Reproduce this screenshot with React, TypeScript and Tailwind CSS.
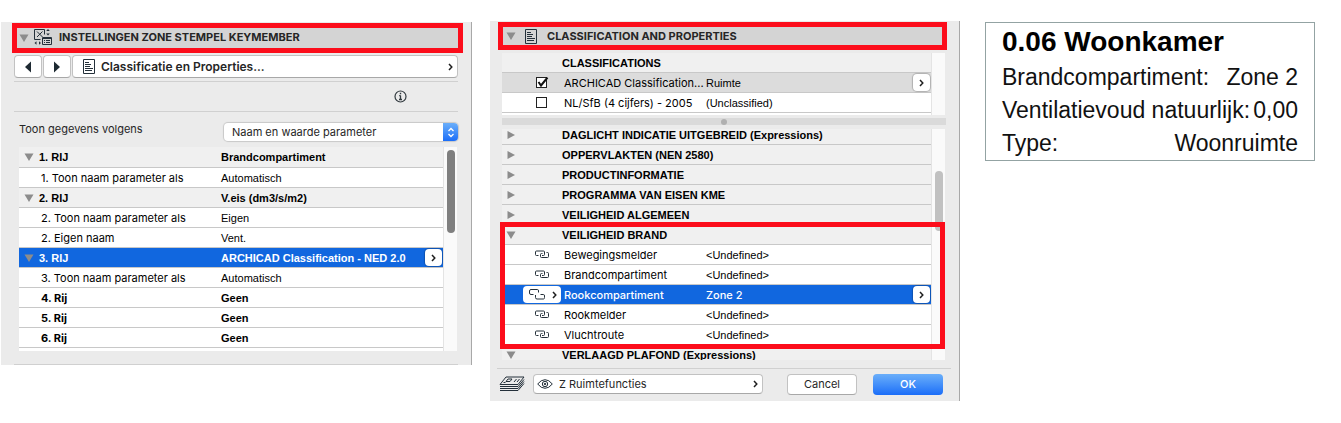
import type { ReactNode } from "react";
import clsx from "clsx";

type Kind = "group" | "item" | "bold" | "selected";

type ZoneRow = { label: string; value: string; kind: Kind };

type PropertyRow = {
  label: string;
  value?: string;
  kind: "closed" | "open" | "item" | "selected";
};

const zoneRows: ZoneRow[] = [
  { label: "1. RIJ", value: "Brandcompartiment", kind: "group" },
  { label: "1. Toon naam parameter als", value: "Automatisch", kind: "item" },
  { label: "2. RIJ", value: "V.eis (dm3/s/m2)", kind: "group" },
  { label: "2. Toon naam parameter als", value: "Eigen", kind: "item" },
  { label: "2. Eigen naam", value: "Vent.", kind: "item" },
  {
    label: "3. RIJ",
    value: "ARCHICAD Classification - NED 2.0",
    kind: "selected",
  },
  { label: "3. Toon naam parameter als", value: "Automatisch", kind: "item" },
  { label: "4. Rij", value: "Geen", kind: "bold" },
  { label: "5. Rij", value: "Geen", kind: "bold" },
  { label: "6. Rij", value: "Geen", kind: "bold" },
];

const propertyRows: PropertyRow[] = [
  { label: "DAGLICHT INDICATIE UITGEBREID (Expressions)", kind: "closed" },
  { label: "OPPERVLAKTEN (NEN 2580)", kind: "closed" },
  { label: "PRODUCTINFORMATIE", kind: "closed" },
  { label: "PROGRAMMA VAN EISEN KME", kind: "closed" },
  { label: "VEILIGHEID ALGEMEEN", kind: "closed" },
  { label: "VEILIGHEID BRAND", kind: "open" },
  { label: "Bewegingsmelder", value: "<Undefined>", kind: "item" },
  { label: "Brandcompartiment", value: "<Undefined>", kind: "item" },
  { label: "Rookcompartiment", value: "Zone 2", kind: "selected" },
  { label: "Rookmelder", value: "<Undefined>", kind: "item" },
  { label: "Vluchtroute", value: "<Undefined>", kind: "item" },
  { label: "VERLAAGD PLAFOND (Expressions)", kind: "open" },
];

const stampLines = [
  { label: "Brandcompartiment:", value: "Zone 2" },
  { label: "Ventilatievoud natuurlijk:", value: "0,00" },
  { label: "Type:", value: "Woonruimte" },
];

const ui = "font-['Inter',sans-serif]";
const helv = "font-['Liberation_Sans',Arial,sans-serif]";

const Triangle = ({ open }: { open: boolean }) => (
  <svg width="10" height="10" viewBox="0 0 10 10" className="shrink-0">
    <path
      d={open ? "M0.5 1.5h9L5 9z" : "M1.5 1v8L9 5z"}
      fill="#8c8c8c"
    />
  </svg>
);

const Chevron = () => (
  <svg width="5" height="8" viewBox="0 0 5 8" className="shrink-0">
    <path d="M1 1l2.8 3L1 7" fill="none" stroke="#1f1f1f" strokeWidth="1.5" />
  </svg>
);

const StampIcon = () => (
  <svg
    width="20"
    height="18"
    viewBox="0 0 20 18"
    fill="none"
    stroke="#24303a"
    className="shrink-0"
  >
    <path d="M7.500 10.500h-6v-10h10v5" />
    <path d="M4 2.500l5.500 5.500M9.500 2.500l-5.500 5.500" />
    <path d="M9.500 8.500h9v7h-9zM9.500 9.500h9" />
    <path d="M11 11.500h1M13 11.500h4M11 13.500h1M13 13.500h4" />
    <path
      d="M15 0l1.800 2h-3.600zM15 6.500l1.800-2h-3.600zM1.500 14l2-1.800v3.600zM8 14l-2-1.800v3.600z"
      fill="#24303a"
      stroke="none"
    />
  </svg>
);

const PageIcon = () => (
  <svg
    width="12"
    height="15"
    viewBox="0 0 12 15"
    fill="none"
    stroke="#24303a"
    className="shrink-0"
  >
    <path d="M0.500 0.500h11v14h-11z" />
    <path d="M2 3.500h4M2 5.500h6M2 7.500h5M2 9.500h8M2 11.500h7" />
  </svg>
);

const InfoIcon = () => (
  <svg width="13" height="13" viewBox="0 0 13 13" fill="none" stroke="#333b40">
    <circle cx="6.500" cy="6.500" r="5.500" strokeWidth="1.2" />
    <path d="M6.500 5.500v4M5.200 5.600h1.300M5 9.500h3" strokeWidth="1.3" />
    <path d="M5.800 3.500h1.400" strokeWidth="1.5" />
  </svg>
);

const LinkIcon = () => (
  <svg
    width="15"
    height="9"
    viewBox="0 0 15 9"
    fill="none"
    stroke="#24303a"
  >
    <path d="M3.500 5.500H1.500Q0.500 5.500 0.500 4.500V2Q0.500 1 1.500 1H8.500Q9.500 1 9.500 2V4.500Q9.500 5.500 8.500 5.500H7" />
    <path d="M11.500 2.500H12.500Q13.500 2.500 13.500 3.500V6.500Q13.500 7.500 12.500 7.500H6.500Q5.500 7.500 5.500 6.500V4.500Q5.500 3.500 6.500 3.500H7.500" />
  </svg>
);

const UnlinkIcon = () => (
  <svg
    width="17"
    height="11"
    viewBox="0 0 17 11"
    fill="none"
    stroke="#24303a"
  >
    <path d="M4.500 5.500H2Q0.500 5.500 0.500 4V2Q0.500 0.500 2 0.500H8.500Q9.500 0.500 9.500 2V3.500" />
    <path d="M6.500 6V8.500Q6.500 10 8 10H14.500Q15.500 10 15.500 8.500V7Q15.500 5.500 14.500 5.500H11.500" />
  </svg>
);

const LayersIcon = () => (
  <svg
    width="26"
    height="16"
    viewBox="0 0 26 16"
    fill="none"
    stroke="#24303a"
    className="shrink-0"
  >
    <path d="M7 1h18l-6 7.500H1z" fill="#ebebeb" />
    <path d="M1 10.500h18l6-7M1 12.500h18l6-7M1 14.500h18l6-7" />
    <path d="M7 5.500l2-2.500h4l-2 2.500zM15 6l2.500-3M18 6l2.500-3M4.500 6.500h2" />
  </svg>
);

const EyeIcon = () => (
  <svg
    width="16"
    height="10"
    viewBox="0 0 16 10"
    fill="none"
    stroke="#24303a"
    className="shrink-0"
  >
    <path d="M0.700 5Q4 0.700 8 0.700T15.300 5Q12 9.300 8 9.300T0.700 5z" />
    <circle cx="8" cy="5" r="2.700" />
    <circle cx="8" cy="5" r="0.800" fill="#24303a" />
  </svg>
);

const SectionHeader = ({
  icon,
  title,
  className,
}: {
  icon: ReactNode;
  title: string;
  className: string;
}) => (
  <header
    className={clsx(
      "flex items-center border-5 border-[#fc0d1b] bg-[#d4d4d4] text-[#262626]",
      className
    )}
  >
    <Triangle open />
    {icon}
    <h2 className="text-[11px] font-bold whitespace-nowrap">{title}</h2>
  </header>
);

const RowButton = ({ label }: { label: string }) => (
  <button
    type="button"
    aria-label={label}
    className="flex size-[17px] shrink-0 items-center justify-center rounded-sm bg-white shadow-[0_0_1px_1px_rgba(0,0,0,0.2)]"
  >
    <Chevron />
  </button>
);

const ZoneTable = () => (
  <table className="w-full table-fixed border-separate border-spacing-0">
    <colgroup>
      <col className="w-[202px]" />
      <col />
    </colgroup>
    <tbody>
      {zoneRows.map((row) => {
        const parent = row.kind === "group" || row.kind === "selected";
        return (
          <tr
            key={row.label}
            className={clsx(
              "h-5 first:h-[21px]",
              row.kind === "group" && "bg-[#f0f0f0]",
              row.kind === "selected" && "bg-[#1167df] text-white",
              row.kind !== "item" && "font-bold"
            )}
          >
            <th
              scope="row"
              className="border-b border-[#c8c8c8] p-0 text-left font-[inherit]"
            >
              <div
                className={clsx(
                  "flex items-center gap-[5px] leading-4",
                  parent ? "pl-[5px]" : "pl-[22px]",
                  parent ? helv : ui,
                  row.kind === "item" ? "font-normal" : "font-bold"
                )}
              >
                {parent && <Triangle open />}
                {row.label}
              </div>
            </th>
            <td className={clsx("border-b border-[#c8c8c8] p-0", helv)}>
              <div className="flex items-center justify-between pr-px leading-4">
                {row.value}
                {row.kind === "selected" && <RowButton label="Wijzig 3. RIJ" />}
              </div>
            </td>
          </tr>
        );
      })}
    </tbody>
  </table>
);

const ZonePanel = () => (
  <section
    className={clsx(
      "mt-px min-w-0 border-r border-[#a8a8a8] bg-[#ebebeb] pt-px",
      ui
    )}
  >
    <SectionHeader
      className="mr-2 ml-[11px] h-[30px] pb-px pl-0.5"
      title="INSTELLINGEN ZONE STEMPEL KEYMEMBER"
      icon={
        <span className="mr-1.5 ml-1">
          <StampIcon />
        </span>
      }
    />
    <div className="mt-0.5 mr-[13px] ml-[13px] flex h-[23px] gap-px">
      <button
        type="button"
        aria-label="Vorige"
        className="flex w-7 items-center justify-center rounded border border-[#c2c2c2] border-b-[#a8a8a8] bg-white"
      >
        <svg width="8" height="12" viewBox="0 0 8 12">
          <path d="M7 0.500v11L1 6z" fill="#1e2a32" />
        </svg>
      </button>
      <button
        type="button"
        aria-label="Volgende"
        className="flex w-7 items-center justify-center rounded border border-[#c2c2c2] border-b-[#a8a8a8] bg-white"
      >
        <svg width="8" height="12" viewBox="0 0 8 12">
          <path d="M1 0.500v11L7 6z" fill="#1e2a32" />
        </svg>
      </button>
      <button
        type="button"
        className="flex flex-1 items-center rounded border border-[#c2c2c2] border-b-[#a8a8a8] bg-white pr-1 pl-2.5 text-xs font-semibold text-[#262626]"
      >
        <PageIcon />
        <span className="ml-1.5 flex-1 text-left">
          Classificatie en Properties...
        </span>
        <Chevron />
      </button>
    </div>
    <div className="mt-[3px] mr-[13px] ml-[13px] flex h-[31px] items-center justify-end border-y border-[#d0d0d0] pr-[51px]">
      <InfoIcon />
    </div>
    <div className="mt-[11px] mr-[13px] ml-[18px] flex h-[18px] items-start text-[11px] text-[#262626]">
      <label htmlFor="display-mode" className="w-[205px] leading-3">
        Toon gegevens volgens
      </label>
      <div className="relative h-full min-w-0 flex-1">
        <select
          id="display-mode"
          className="block h-full w-full appearance-none rounded-sm bg-white pl-2 leading-4 shadow-[0_0_1px_1px_rgba(0,0,0,0.15)]"
        >
          <option>Naam en waarde parameter</option>
        </select>
        <span className="pointer-events-none absolute inset-y-0 right-0 flex w-[15px] items-center justify-center rounded-r-sm bg-linear-to-b from-[#6aaef9] to-[#1a6df8]">
          <svg
            width="8"
            height="11"
            viewBox="0 0 8 11"
            fill="none"
            stroke="#fff"
            strokeWidth="1.3"
          >
            <path d="M1.500 4L4 1.500L6.500 4M1.500 7L4 9.500L6.500 7" />
          </svg>
        </span>
      </div>
    </div>
    <div className="mt-1.5 mr-[14px] ml-[18px] flex h-[204px] overflow-hidden bg-white text-[11px] text-black">
      <div className="min-w-0 flex-1 bg-white">
        <ZoneTable />
      </div>
      <div className="w-[14px] border-l border-[#e4e4e4] bg-[#fafafa] pt-[3px]">
        <div className="mx-auto h-[83px] w-2 rounded-full bg-[#7f7f7f]" />
      </div>
    </div>
    <div className="mt-[13px] mr-[13px] ml-[13px] border-t border-[#d0d0d0]" />
  </section>
);

const ClassificationCheck = ({
  label,
  checked,
}: {
  label: string;
  checked: boolean;
}) => (
  <span className="relative block size-[11px]">
    <input
      type="checkbox"
      aria-label={label}
      defaultChecked={checked}
      className="peer block size-[11px] appearance-none border border-[#222] bg-white"
    />
    <svg
      width="13"
      height="11"
      viewBox="0 0 13 11"
      className="pointer-events-none absolute top-0 left-0 hidden peer-checked:block"
    >
      <path
        d="M2.500 5L5 8.500L11.500 0.500"
        fill="none"
        stroke="#111"
        strokeWidth="2"
      />
    </svg>
  </span>
);

const PropertyColumns = () => (
  <colgroup>
    <col className="w-[60px]" />
    <col className="w-36" />
    <col />
  </colgroup>
);

const ClassificationTable = () => (
  <table className="w-full table-fixed border-separate border-spacing-0 [&_td]:h-5 [&_td]:border-b [&_td]:border-[#c8c8c8] [&_td]:p-0 [&_td]:leading-4">
    <PropertyColumns />
    <thead>
      <tr className="bg-[#f0f0f0]">
        <td />
        <th
          colSpan={2}
          className={clsx(
            "h-5 border-b border-[#c8c8c8] p-0 text-left leading-4 font-bold",
            helv
          )}
        >
          CLASSIFICATIONS
        </th>
      </tr>
    </thead>
    <tbody>
      <tr className="bg-[#dcdcdc]">
        <td>
          <div className="pl-[34px]">
            <ClassificationCheck label="ARCHICAD Classification" checked />
          </div>
        </td>
        <td>
          <div className="pl-0.5 whitespace-nowrap">
            ARCHICAD Classification...
          </div>
        </td>
        <td className={helv}>
          <div className="flex items-center justify-between pr-px">
            Ruimte
            <RowButton label="Kies classificatie" />
          </div>
        </td>
      </tr>
      <tr className="bg-white">
        <td>
          <div className="pl-[34px]">
            <ClassificationCheck label="NL/SfB (4 cijfers)" checked={false} />
          </div>
        </td>
        <td>
          <div className="pl-0.5 whitespace-nowrap">
            NL/SfB (4 cijfers) - 2005
          </div>
        </td>
        <td className={helv}>(Unclassified)</td>
      </tr>
    </tbody>
  </table>
);

const PropertyTable = () => (
  <table className="-mt-1 w-full table-fixed border-separate border-spacing-0 [&_td]:h-5 [&_td]:border-b [&_td]:border-[#c8c8c8] [&_td]:p-0 [&_td]:leading-4">
    <PropertyColumns />
    <tbody>
      {propertyRows.map((row) => {
        if (row.kind === "closed" || row.kind === "open") {
          return (
            <tr key={row.label} className="bg-[#f0f0f0]">
              <td>
                <div className="pl-1">
                  <Triangle open={row.kind === "open"} />
                </div>
              </td>
              <td
                colSpan={2}
                className={clsx("font-bold whitespace-nowrap", helv)}
              >
                {row.label}
              </td>
            </tr>
          );
        }
        const selected = row.kind === "selected";
        return (
          <tr
            key={row.label}
            className={selected ? "bg-[#1167df] text-white" : "bg-white"}
          >
            <td>
              {selected ? (
                <button
                  type="button"
                  aria-label="Koppeling"
                  className="ml-[21px] flex h-[17px] w-[38px] items-center justify-between rounded-sm bg-white pr-1 pl-1.5"
                >
                  <UnlinkIcon />
                  <Chevron />
                </button>
              ) : (
                <div className="pl-[33px]">
                  <LinkIcon />
                </div>
              )}
            </td>
            <td>
              <div className={clsx("pl-0.5", selected && "font-medium")}>
                {row.label}
              </div>
            </td>
            <td className={selected ? "font-medium" : helv}>
              <div className="flex items-center justify-between pr-px">
                {row.value}
                {selected && <RowButton label="Kies zone" />}
              </div>
            </td>
          </tr>
        );
      })}
    </tbody>
  </table>
);

const PropertiesPanel = () => (
  <section
    className={clsx(
      "ml-[18px] min-w-0 border-r border-[#a8a8a8] bg-[#ebebeb] pt-px",
      ui
    )}
  >
    <SectionHeader
      className="mr-3 ml-2 h-7 pl-[3px]"
      title="CLASSIFICATION AND PROPERTIES"
      icon={
        <span className="mr-2.5 ml-[9px]">
          <PageIcon />
        </span>
      }
    />
    <div className="mt-[3px] mr-[14px] ml-3 flex h-[62px] bg-white text-[11px] text-black">
      <div className="min-w-0 flex-1">
        <ClassificationTable />
      </div>
      <div className="w-[14px] border-l border-[#e4e4e4] bg-[#fafafa]" />
    </div>
    <div className="mt-[3px] mr-[13px] ml-3 flex h-[7px] items-center justify-center bg-[#dadada]">
      <span className="size-1.5 rounded-full bg-[#b0b0b0]" />
    </div>
    <div className="relative mt-1 mr-[14px] ml-3">
      <div className="flex h-[231px] overflow-hidden text-[11px] text-black">
        <div className="min-w-0 flex-1">
          <PropertyTable />
        </div>
        <div className="w-[14px] border-l border-[#e4e4e4] bg-[#fafafa] pt-[42px]">
          <div className="mx-auto h-[60px] w-2 rounded-full bg-[#c1c1c1]" />
        </div>
      </div>
      <div className="pointer-events-none absolute top-[93px] right-0 -left-0.5 h-[127px] border-5 border-[#fc0d1b]" />
    </div>
    <footer className="mt-2 mr-2 ml-[7px] flex items-start border-t border-[#d0d0d0] pt-[5px] pr-2 pb-1.5 pl-0.5 text-[11px] text-[#262626]">
      <span className="mt-0.5 mr-2">
        <LayersIcon />
      </span>
      <button
        type="button"
        className="mr-6 flex h-5 flex-1 items-center rounded border border-[#c2c2c2] border-b-[#a8a8a8] bg-white pr-1 pl-[3px]"
      >
        <EyeIcon />
        <span className="ml-1.5 flex-1 text-left">Z Ruimtefuncties</span>
        <Chevron />
      </button>
      <button
        type="button"
        className="mr-4 h-[21px] w-[70px] rounded border border-[#c2c2c2] border-b-[#a8a8a8] bg-white"
      >
        Cancel
      </button>
      <button
        type="button"
        className="h-[21px] w-[70px] rounded bg-linear-to-b from-[#6aaef9] to-[#1a6df8] font-medium text-white"
      >
        OK
      </button>
    </footer>
  </section>
);

const ZoneStamp = () => (
  <section
    className={clsx(
      "mt-px mr-[26px] ml-[25px] min-w-0 border border-[#93a3a3] bg-white px-4 text-black",
      helv
    )}
  >
    <h2 className="text-[28px] leading-[38px] font-bold whitespace-nowrap">
      0.06 Woonkamer
    </h2>
    <dl className="text-[23px] leading-[33px] text-[#111]">
      {stampLines.map((line) => (
        <div key={line.label} className="flex justify-between whitespace-nowrap">
          <dt>{line.label}</dt>
          <dd>{line.value}</dd>
        </div>
      ))}
    </dl>
  </section>
);

const App = () => {
  return (
    <main className="grid grid-cols-[471fr_488fr_381fr] items-start bg-white pt-[21px] pl-px">
      <ZonePanel />
      <PropertiesPanel />
      <ZoneStamp />
    </main>
  );
};

export default App;
